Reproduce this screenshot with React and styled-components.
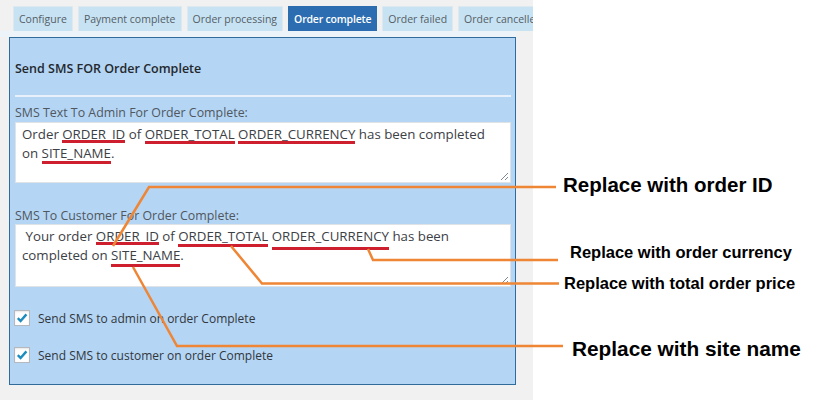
import React from 'react'
import styled, { createGlobalStyle } from 'styled-components'

const GlobalStyle = createGlobalStyle`
  html, body {
    margin: 0;
    padding: 0;
    background: #ffffff;
  }
  body {
    font-family: "Open Sans", "Noto Sans", sans-serif;
  }
`

const tabs = [
  'Configure',
  'Payment complete',
  'Order processing',
  'Order complete',
  'Order failed',
  'Order cancelled',
]

const Page = styled.div`
  position: relative;
  display: flex;
  width: 817px;
  height: 400px;
  overflow: hidden;
`

const Admin = styled.div`
  flex-shrink: 0;
  width: 533px;
  height: 100%;
  background: #f1f1f1;
  overflow: hidden;
`

const Notes = styled.div`
  flex: 1;
  background: #ffffff;
`

const TabBar = styled.div`
  display: flex;
  gap: 5px;
  padding: 6px 0 0 13px;
  white-space: nowrap;
`

const Tab = styled.div`
  flex-shrink: 0;
  box-sizing: border-box;
  height: 25px;
  padding: 0 5px;
  line-height: 24px;
  font-size: 10.5px;
  border: 1px solid ${p => (p.$active ? '#2a6cad' : '#dde8ef')};
  border-bottom: none;
  background: ${p => (p.$active ? '#2b6db0' : '#c7e3f3')};
  color: ${p => (p.$active ? '#ffffff' : '#555d66')};
  font-weight: ${p => (p.$active ? 600 : 400)};
  letter-spacing: ${p => (p.$active ? '-0.2px' : '0')};
`

const TabFloor = styled.div`
  height: 6px;
  margin-right: 17px;
  background: #edf4f9;
`

const Panel = styled.section`
  box-sizing: border-box;
  height: 348px;
  margin: 0 17px 0 9px;
  padding: 22px 4px 0 5px;
  border: 1px solid #2f6c9c;
  background: #b4d5f4;
`

const Heading = styled.h3`
  margin: 0;
  font-size: 12.5px;
  line-height: 18px;
  font-weight: 600;
  color: #23282d;
`

const Rule = styled.div`
  height: 2px;
  margin-top: 17px;
  background: #e8f1fb;
`

const FieldLabel = styled.div`
  margin-top: ${p => p.$gap}px;
  font-size: 12.4px;
  line-height: 16px;
  color: #50575e;
`

const SmsBox = styled.div`
  position: relative;
  box-sizing: border-box;
  height: ${p => p.$height}px;
  margin-top: ${p => p.$gap}px;
  padding: 2px 6px;
  border: 1px solid #dfe3e6;
  background: #ffffff;
  font-size: 13.3px;
  line-height: 19px;
  color: #3c4146;
  white-space: nowrap;
`

const Mark = styled.span`
  position: relative;

  &::after {
    content: '';
    position: absolute;
    left: ${p => p.$l || 0}px;
    right: ${p => p.$r || 0}px;
    bottom: ${p => p.$b || 0}px;
    height: 3px;
    background: #cd1f2d;
  }
`

const Grip = styled.svg`
  position: absolute;
  right: 1px;
  bottom: 1px;
  width: 10px;
  height: 10px;
`

const CheckRow = styled.label`
  display: flex;
  align-items: center;
  gap: 8px;
  height: 16px;
  margin-top: ${p => p.$gap}px;
  margin-left: -1px;
  font-size: 12px;
  color: #32373c;
`

const Box = styled.span`
  display: flex;
  align-items: center;
  justify-content: center;
  box-sizing: border-box;
  width: 16px;
  height: 16px;
  border: 1px solid #b4b9be;
  background: #ffffff;
  box-shadow: inset 0 1px 2px rgba(0, 0, 0, 0.1);
`

const Overlay = styled.svg`
  position: absolute;
  left: 0;
  top: 0;
  width: 817px;
  height: 400px;
  pointer-events: none;
`

const Callout = styled.div`
  position: absolute;
  top: ${p => p.$top}px;
  left: ${p => p.$left}px;
  font-family: "Liberation Sans", Arial, sans-serif;
  font-weight: 700;
  font-size: ${p => p.$size}px;
  line-height: 1;
  color: #000000;
  white-space: nowrap;
`

const ResizeGrip = () => (
  <Grip viewBox="0 0 10 10">
    <path d="M9 2 L2 9 M9 6 L6 9" stroke="#7e8993" strokeWidth="1" fill="none" />
  </Grip>
)

const Check = ({ children, gap }) => (
  <CheckRow $gap={gap}>
    <Box>
      <svg width="12" height="12" viewBox="0 0 12 12">
        <path d="M1.8 6.2 L4.6 9 L10.4 2.4" stroke="#1e8cbe" strokeWidth="2.4" fill="none" />
      </svg>
    </Box>
    {children}
  </CheckRow>
)

const leaders = [
  '113,246 149,187 556,187',
  '368,249 373,260 558,260',
  '231,246 262,283.5 559,283.5',
  '133,267 177,346 563,346',
]

const callouts = [
  { text: 'Replace with order ID', top: 175, left: 563, size: 20.5 },
  { text: 'Replace with order currency', top: 244, left: 570, size: 16.5 },
  { text: 'Replace with total order price', top: 275, left: 564, size: 16.5 },
  { text: 'Replace with site name', top: 338.5, left: 572, size: 20.8 },
]

export default function App() {
  return (
    <Page>
      <GlobalStyle />
      <Admin>
        <TabBar>
          {tabs.map(t => (
            <Tab key={t} $active={t === 'Order complete'}>{t}</Tab>
          ))}
        </TabBar>
        <TabFloor />
        <Panel>
          <Heading>Send SMS FOR Order Complete</Heading>
          <Rule />
          <FieldLabel $gap={8}>SMS Text To Admin For Order Complete:</FieldLabel>
          <SmsBox $gap={1} $height={61}>
            Order <Mark>ORDER_ID</Mark> of <Mark $b={-1}>ORDER_TOTAL</Mark>{' '}
            <Mark $b={-1}>ORDER_CURRENCY</Mark> has been completed
            <br />
            on <Mark $b={-2}>SITE_NAME</Mark>.
            <ResizeGrip />
          </SmsBox>
          <FieldLabel $gap={25}>SMS To Customer For Order Complete:</FieldLabel>
          <SmsBox $gap={0} $height={63}>
            &nbsp;Your order <Mark>ORDER_ID</Mark> of <Mark $b={-2}>ORDER_TOTAL</Mark>{' '}
            <Mark $b={-5}>ORDER_CURRENCY</Mark> has been
            <br />
            completed on <Mark $b={-3}>SITE_NAME</Mark>.
            <ResizeGrip />
          </SmsBox>
          <Check gap={23}>Send SMS to admin on order Complete</Check>
          <Check gap={21}>Send SMS to customer on order Complete</Check>
        </Panel>
      </Admin>
      <Notes />
      <Overlay viewBox="0 0 817 400">
        {leaders.map(pts => (
          <polyline key={pts} points={pts} fill="none" stroke="#ee8636" strokeWidth="2.5" />
        ))}
      </Overlay>
      {callouts.map(c => (
        <Callout key={c.text} $top={c.top} $left={c.left} $size={c.size}>
          {c.text}
        </Callout>
      ))}
    </Page>
  )
}
